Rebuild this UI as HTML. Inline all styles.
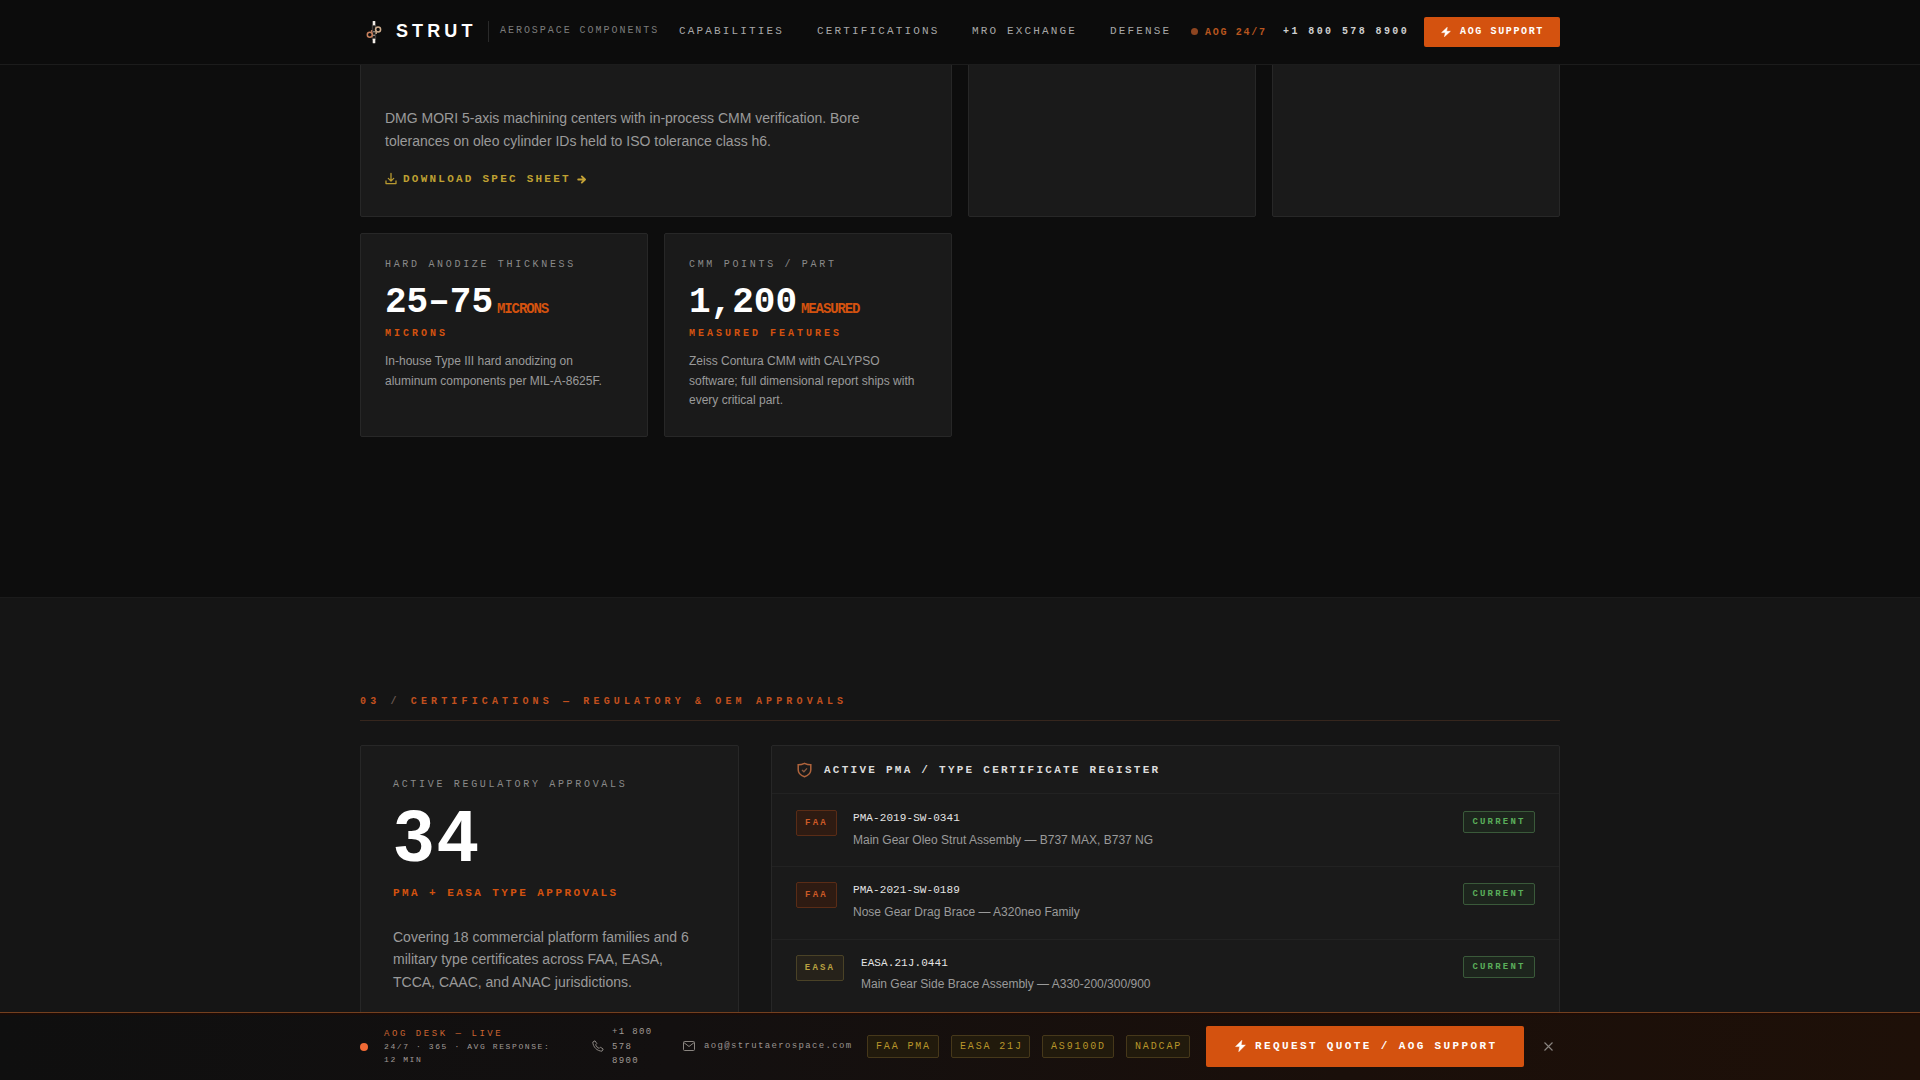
<!DOCTYPE html>
<html><head><meta charset="utf-8">
<style>
*{box-sizing:border-box;margin:0;padding:0}
html,body{width:1920px;height:1080px;overflow:hidden;background:#0d0d0d;font-family:"Liberation Sans",sans-serif;color:#e8e8e8}
.m{font-family:"Liberation Mono",monospace;white-space:nowrap}
.a{position:absolute}
#nav{position:absolute;left:0;top:0;width:1920px;height:65px;background:#0c0c0c;border-bottom:1px solid #1c1c1c;z-index:10}
.nl{position:absolute;top:25px;font-family:"Liberation Mono",monospace;font-size:11px;letter-spacing:2.15px;color:#a8a8a8;white-space:nowrap}
.card{position:absolute;background:#1a1a1a;border:1px solid #272727;border-radius:2px}
.lbl{position:absolute;font-family:"Liberation Mono",monospace;font-size:10px;letter-spacing:2.68px;color:#8a8a8a;white-space:nowrap}
.p12{position:absolute;font-size:12px;line-height:19.6px;color:#9a9a9a}
#sec2{position:absolute;left:0;top:597px;width:1920px;height:483px;background:#151515;border-top:1px solid #1b1b1b}
#bar{position:absolute;left:0;top:1012px;width:1920px;height:68px;background:linear-gradient(90deg,#0f0f0f 0%,#131010 35%,#1a0f0a 70%,#1e1008 100%);border-top:1px solid #73401f;z-index:20}
#bar:before{content:"";position:absolute;left:0;top:0;width:1920px;height:3px;background:linear-gradient(#200a03,rgba(32,10,3,0))}
.row{position:absolute;left:772px;width:787px;height:73px;border-top:1px solid #222}
.bdg{position:absolute;font-family:"Liberation Mono",monospace;font-size:9px;font-weight:bold;letter-spacing:2.2px;text-align:center;white-space:nowrap;border:1px solid;border-radius:2px}
.faa{color:#cc5a26;background:#2e1b12;border-color:#5a2c16}
.easa{color:#b9a040;background:#26221a;border-color:#4a4226}
.cur{color:#5aae5a;background:#1d251d;border-color:#3a5a3a}
.code{position:absolute;font-family:"Liberation Mono",monospace;font-size:11px;letter-spacing:0.08px;color:#e4e4e4;white-space:nowrap}
.desc{position:absolute;font-size:12px;color:#9a9a9a;white-space:nowrap}
.tb{position:absolute;top:22px;height:23px;font-family:"Liberation Mono",monospace;font-size:10px;letter-spacing:1.85px;line-height:21px;color:#b8962a;background:#211a0c;border:1px solid #46381a;border-radius:2px;padding-left:8px;white-space:nowrap}
</style></head>
<body>
<!-- NAV -->
<div id="nav">
  <svg class="a" style="left:364px;top:19px" width="22" height="27" viewBox="0 0 22 27">
    <rect x="8.3" y="6.3" width="3.4" height="13.2" fill="#1a1816" stroke="#4e4844" stroke-width="0.9"/>
    <rect x="9.2" y="12" width="1.6" height="1.4" fill="#9a948e"/>
    <rect x="9.2" y="15.6" width="1.6" height="1.4" fill="#a8a29c"/>
    <circle cx="14.1" cy="10.6" r="2.5" fill="none" stroke="#cfae8e" stroke-width="1.5"/>
    <path d="M12.2 11.5 V15" stroke="#c9a888" stroke-width="1.4"/>
    <circle cx="5.8" cy="15.7" r="2.5" fill="none" stroke="#c8805e" stroke-width="1.5"/>
    <path d="M7.6 11 V14.5" stroke="#b87a5e" stroke-width="1.4"/>
    <rect x="8.7" y="2" width="2.6" height="4.3" rx="0.6" fill="#f2ede8"/>
    <rect x="8.7" y="19.7" width="2.6" height="4.6" rx="0.6" fill="#f2ede8"/>
  </svg>
  <div class="a" style="left:396px;top:21px;font-size:18px;font-weight:bold;letter-spacing:4.1px;color:#fff;line-height:21px">STRUT</div>
  <div class="a" style="left:488px;top:21px;width:1px;height:21px;background:#2a2a2a"></div>
  <div class="a m" style="left:500px;top:25px;font-size:10px;letter-spacing:1.96px;color:#7c7c7c">AEROSPACE COMPONENTS</div>
  <div class="nl" style="left:679px">CAPABILITIES</div>
  <div class="nl" style="left:817px">CERTIFICATIONS</div>
  <div class="nl" style="left:972px">MRO EXCHANGE</div>
  <div class="nl" style="left:1110px">DEFENSE</div>
  <div class="a" style="left:1191px;top:28px;width:7px;height:7px;border-radius:50%;background:#8e4520"></div>
  <div class="a m" style="left:1205px;top:27px;font-size:10px;font-weight:bold;letter-spacing:1.7px;color:#b8561f">AOG 24/7</div>
  <div class="a m" style="left:1283px;top:26px;font-size:10px;font-weight:bold;letter-spacing:2.41px;color:#d0d0d0">+1 800 578 8900</div>
  <div class="a" style="left:1424px;top:17px;width:136px;height:30px;background:#d4520f;border-radius:2px"></div>
  <svg class="a" style="left:1441px;top:27px" width="10" height="10" viewBox="0 0 10 10"><path d="M6.3 0.2 L0.6 5.6 H4.3 L3.4 9.8 L9.4 4.3 H5.6 Z" fill="#fff" stroke="#fff" stroke-width="0.5" stroke-linejoin="round"/></svg>
  <div class="a m" style="left:1460px;top:26px;font-size:10px;font-weight:bold;letter-spacing:1.63px;color:#fff">AOG SUPPORT</div>
</div>

<!-- SECTION 1 cards -->
<div class="card" style="left:360px;top:-40px;width:592px;height:257px"></div>
<div class="card" style="left:968px;top:-40px;width:288px;height:257px"></div>
<div class="card" style="left:1272px;top:-40px;width:288px;height:257px"></div>
<div class="a" style="left:385px;top:107px;width:540px;font-size:14px;line-height:23px;color:#9a9a9a">DMG MORI 5-axis machining centers with in-process CMM verification. Bore tolerances on oleo cylinder IDs held to ISO tolerance class h6.</div>
<svg class="a" style="left:385px;top:172px" width="12" height="13" viewBox="0 0 12 13" fill="none" stroke="#b89a30" stroke-width="1.3" stroke-linecap="round" stroke-linejoin="round"><path d="M6 1.5 V9 M3.3 6.4 L6 9.1 L8.7 6.4 M1 9 V11.6 H11 V9"/></svg>
<div class="a m" style="left:403px;top:173px;font-size:11px;font-weight:bold;letter-spacing:2.23px;color:#bfa032">DOWNLOAD SPEC SHEET</div>
<svg class="a" style="left:577px;top:175px" width="10" height="9" viewBox="0 0 10 9" fill="none" stroke="#c4a236" stroke-width="1.9" stroke-linecap="round" stroke-linejoin="round"><path d="M1.2 4.5 H7.8 M4.8 1.4 L8 4.5 L4.8 7.6"/></svg>

<div class="card" style="left:360px;top:233px;width:288px;height:204px"></div>
<div class="card" style="left:664px;top:233px;width:288px;height:204px"></div>
<div class="lbl" style="left:385px;top:259px">HARD ANODIZE THICKNESS</div>
<div class="a m" style="left:385px;top:282px;font-size:36px;font-weight:bold;color:#fff">25–75</div>
<div class="a m" style="left:497px;top:301px;font-size:14px;font-weight:bold;letter-spacing:-1.1px;color:#d4520f">MICRONS</div>
<div class="a m" style="left:385px;top:328px;font-size:10px;font-weight:bold;letter-spacing:3px;color:#d4520f">MICRONS</div>
<div class="p12" style="left:385px;top:352px;width:238px">In-house Type III hard anodizing on aluminum components per MIL-A-8625F.</div>

<div class="lbl" style="left:689px;top:259px">CMM POINTS / PART</div>
<div class="a m" style="left:689px;top:282px;font-size:36px;font-weight:bold;color:#fff">1,200</div>
<div class="a m" style="left:801px;top:301px;font-size:14px;font-weight:bold;letter-spacing:-1.1px;color:#d4520f">MEASURED</div>
<div class="a m" style="left:689px;top:328px;font-size:10px;font-weight:bold;letter-spacing:3px;color:#d4520f">MEASURED FEATURES</div>
<div class="p12" style="left:689px;top:352px;width:238px">Zeiss Contura CMM with CALYPSO software; full dimensional report ships with every critical part.</div>

<!-- SECTION 2 -->
<div id="sec2"></div>
<div class="a m" style="left:360px;top:696px;font-size:10px;font-weight:bold;letter-spacing:4.15px;color:#c2501e">03 <span style="color:#6a5a50">/</span> CERTIFICATIONS — REGULATORY &amp; OEM APPROVALS</div>
<div class="a" style="left:360px;top:720px;width:1200px;height:1px;background:#36261d"></div>

<div class="card" style="left:360px;top:745px;width:379px;height:400px"></div>
<div class="lbl" style="left:393px;top:779px">ACTIVE REGULATORY APPROVALS</div>
<div class="a" style="left:394px;top:796px;font-size:72px;font-weight:bold;letter-spacing:3.4px;color:#fff;line-height:80px">34</div>
<div class="a m" style="left:393px;top:887px;font-size:11px;font-weight:bold;letter-spacing:2.42px;color:#d4520f">PMA + EASA TYPE APPROVALS</div>
<div class="a" style="left:393px;top:926px;width:313px;font-size:14px;line-height:22.4px;color:#9a9a9a">Covering 18 commercial platform families and 6 military type certificates across FAA, EASA, TCCA, CAAC, and ANAC jurisdictions.</div>

<div class="card" style="left:771px;top:745px;width:789px;height:400px"></div>
<svg class="a" style="left:796px;top:762px" width="17" height="16" viewBox="0 0 17 16" fill="none" stroke="#b0643c" stroke-width="1.5"><path d="M8.5 1.3 C10.5 2.3 12.5 2.8 14.8 2.8 V7.8 C14.8 11.3 12 13.6 8.5 14.8 C5 13.6 2.2 11.3 2.2 7.8 V2.8 C4.5 2.8 6.5 2.3 8.5 1.3 Z"/><path d="M6 8 L7.9 9.8 L11 6.4" stroke="#8a5a40" stroke-width="1.3"/></svg>
<div class="a m" style="left:824px;top:764px;font-size:11px;font-weight:bold;letter-spacing:2.25px;color:#dcdcdc">ACTIVE PMA / TYPE CERTIFICATE REGISTER</div>

<div class="row" style="top:793px"></div>
<div class="bdg faa" style="left:796px;top:810px;width:41px;height:26px;line-height:24px">FAA</div>
<div class="code" style="left:853px;top:812px">PMA-2019-SW-0341</div>
<div class="desc" style="left:853px;top:833px">Main Gear Oleo Strut Assembly — B737 MAX, B737 NG</div>
<div class="bdg cur" style="left:1463px;top:811px;width:72px;height:22px;line-height:20px">CURRENT</div>

<div class="row" style="top:866px"></div>
<div class="bdg faa" style="left:796px;top:882px;width:41px;height:26px;line-height:24px">FAA</div>
<div class="code" style="left:853px;top:884px">PMA-2021-SW-0189</div>
<div class="desc" style="left:853px;top:905px">Nose Gear Drag Brace — A320neo Family</div>
<div class="bdg cur" style="left:1463px;top:883px;width:72px;height:22px;line-height:20px">CURRENT</div>

<div class="row" style="top:939px"></div>
<div class="bdg easa" style="left:796px;top:955px;width:48px;height:26px;line-height:24px">EASA</div>
<div class="code" style="left:861px;top:957px">EASA.21J.0441</div>
<div class="desc" style="left:861px;top:977px">Main Gear Side Brace Assembly — A330-200/300/900</div>
<div class="bdg cur" style="left:1463px;top:956px;width:72px;height:22px;line-height:20px">CURRENT</div>

<!-- BOTTOM BAR -->
<div id="bar">
  <div class="a" style="left:360px;top:30px;width:8px;height:8px;border-radius:50%;background:#f06a35"></div>
  <div class="a m" style="left:384px;top:16px;font-size:9px;letter-spacing:2.55px;color:#cc6530">AOG DESK — LIVE</div>
  <div class="a" style="left:384px;top:27px;width:180px;font-family:'Liberation Mono',monospace;font-size:8px;letter-spacing:1.6px;line-height:13px;color:#a09a96">24/7 · 365 · AVG RESPONSE: 12 MIN</div>
  <svg class="a" style="left:592px;top:27px" width="12" height="12" viewBox="0 0 12 12" fill="none" stroke="#8a8580" stroke-width="1"><path d="M3 0.8 L4.8 3.6 L3.6 4.8 C4.4 6.6 5.4 7.6 7.2 8.4 L8.4 7.2 L11.2 9 L10 11.2 C5 11 1 7 0.8 2 Z"/></svg>
  <div class="a" style="left:612px;top:12px;width:44px;font-family:'Liberation Mono',monospace;font-size:9px;letter-spacing:1.35px;line-height:14.5px;color:#a09a95">+1 800 578 8900</div>
  <svg class="a" style="left:683px;top:28px" width="12" height="10" viewBox="0 0 12 10" fill="none" stroke="#8a8580" stroke-width="1"><rect x="0.5" y="0.5" width="11" height="9" rx="1"/><path d="M0.8 1.5 L6 5.5 L11.2 1.5"/></svg>
  <div class="a m" style="left:704px;top:28px;font-size:9px;letter-spacing:1.35px;color:#9a9490">aog@strutaerospace.com</div>
  <div class="tb" style="left:867px;width:72px">FAA PMA</div>
  <div class="tb" style="left:951px;width:79px">EASA 21J</div>
  <div class="tb" style="left:1042px;width:72px">AS9100D</div>
  <div class="tb" style="left:1126px;width:64px">NADCAP</div>
  <div class="a" style="left:1206px;top:13px;width:318px;height:41px;background:#d4520f;border-radius:2px"></div>
  <svg class="a" style="left:1235px;top:27px" width="11" height="12" viewBox="0 0 11 12"><path d="M6.9 0.3 L0.6 6.6 H4.7 L3.7 11.7 L10.4 5.1 H6.2 Z" fill="#fff" stroke="#fff" stroke-width="0.5" stroke-linejoin="round"/></svg>
  <div class="a m" style="left:1255px;top:27px;font-size:11px;font-weight:bold;letter-spacing:2.38px;color:#fff">REQUEST QUOTE / AOG SUPPORT</div>
  <svg class="a" style="left:1544px;top:29px" width="9" height="9" viewBox="0 0 9 9" fill="none" stroke="#8a8580" stroke-width="1.1"><path d="M0.5 0.5 L8.5 8.5 M8.5 0.5 L0.5 8.5"/></svg>
</div>
</body></html>
